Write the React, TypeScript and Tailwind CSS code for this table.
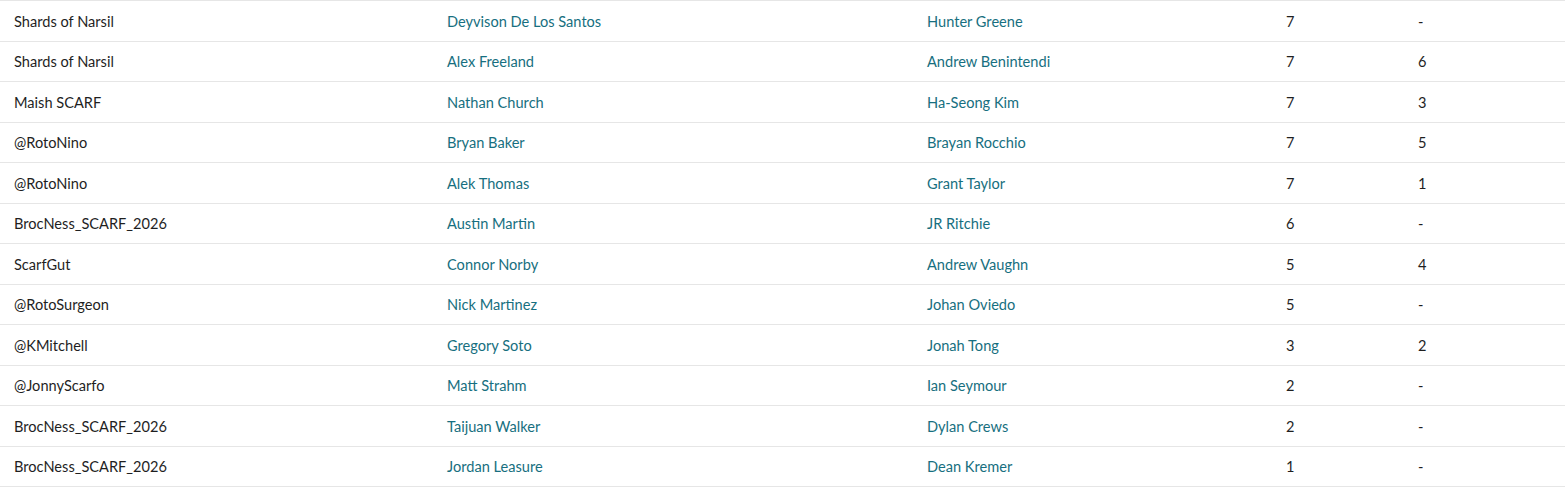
const rows = [
  ['Shards of Narsil', 'Deyvison De Los Santos', 'Hunter Greene', '7', '-'],
  ['Shards of Narsil', 'Alex Freeland', 'Andrew Benintendi', '7', '6'],
  ['Maish SCARF', 'Nathan Church', 'Ha-Seong Kim', '7', '3'],
  ['@RotoNino', 'Bryan Baker', 'Brayan Rocchio', '7', '5'],
  ['@RotoNino', 'Alek Thomas', 'Grant Taylor', '7', '1'],
  ['BrocNess_SCARF_2026', 'Austin Martin', 'JR Ritchie', '6', '-'],
  ['ScarfGut', 'Connor Norby', 'Andrew Vaughn', '5', '4'],
  ['@RotoSurgeon', 'Nick Martinez', 'Johan Oviedo', '5', '-'],
  ['@KMitchell', 'Gregory Soto', 'Jonah Tong', '3', '2'],
  ['@JonnyScarfo', 'Matt Strahm', 'Ian Seymour', '2', '-'],
  ['BrocNess_SCARF_2026', 'Taijuan Walker', 'Dylan Crews', '2', '-'],
  ['BrocNess_SCARF_2026', 'Jordan Leasure', 'Dean Kremer', '1', '-'],
];

export default function App() {
  return (
    <div
      className="w-[1565px] bg-white text-[14.6px] text-[#1f1f1f]"
      style={{ fontFamily: 'Lato, "Open Sans", sans-serif' }}
    >
      <div className="border-b border-[#e6e6e6]">
        {rows.map((r, i) => (
          <div
            key={i}
            className="grid grid-cols-[433px_480px_359px_132px_161px] h-[40.5px] items-center pt-[2px] border-t border-[#e6e6e6]"
          >
            <div className="pl-[14px]">{r[0]}</div>
            <div className="pl-[14px]">
              <a className="text-[#176f80] cursor-pointer">{r[1]}</a>
            </div>
            <div className="pl-[14px]">
              <a className="text-[#176f80] cursor-pointer">{r[2]}</a>
            </div>
            <div className="pl-[14px]">{r[3]}</div>
            <div className="pl-[14px]">{r[4]}</div>
          </div>
        ))}
      </div>
    </div>
  );
}
